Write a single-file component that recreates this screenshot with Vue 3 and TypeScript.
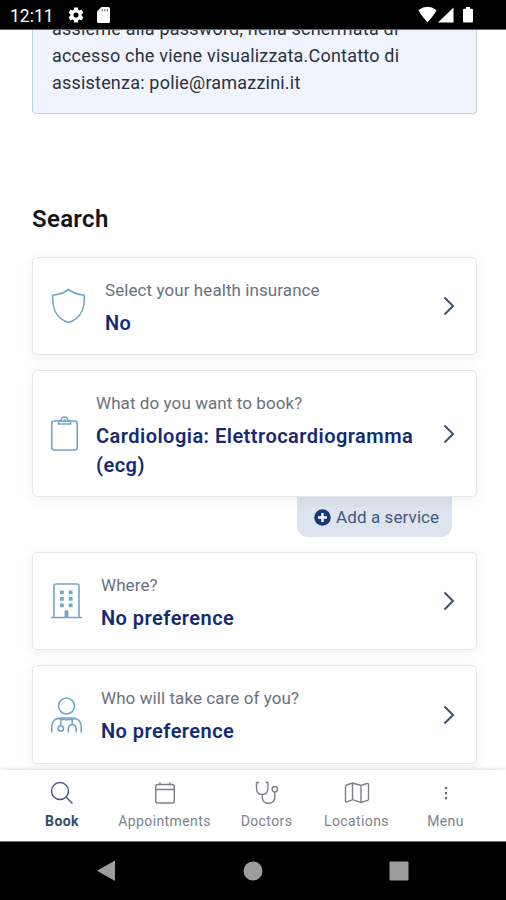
<script setup lang="ts">
type IconName = 'shield' | 'clipboard' | 'building' | 'doctor'

interface Field {
  icon: IconName
  label: string
  value: string
  action?: string
}

interface Tab {
  id: 'book' | 'appointments' | 'doctors' | 'locations' | 'menu'
  label: string
}

const fields: Field[] = [
  { icon: 'shield', label: 'Select your health insurance', value: 'No' },
  {
    icon: 'clipboard',
    label: 'What do you want to book?',
    value: 'Cardiologia: Elettrocardiogramma (ecg)',
    action: 'Add a service',
  },
  { icon: 'building', label: 'Where?', value: 'No preference' },
  { icon: 'doctor', label: 'Who will take care of you?', value: 'No preference' },
]

const tabs: Tab[] = [
  { id: 'book', label: 'Book' },
  { id: 'appointments', label: 'Appointments' },
  { id: 'doctors', label: 'Doctors' },
  { id: 'locations', label: 'Locations' },
  { id: 'menu', label: 'Menu' },
]
</script>

<template>
  <div class="screen">
    <header class="status">
      <span class="clock">12:11</span>
      <svg class="gear" width="18" height="18" viewBox="0 0 24 24">
        <path fill="#fff" fill-rule="evenodd" d="M19.4 13c.04-.3.06-.65.06-1s-.02-.7-.07-1l2.1-1.6c.2-.15.25-.42.12-.64l-2-3.46c-.12-.22-.38-.3-.6-.22l-2.5 1a7.300 7.300 0 0 0-1.700-.98L14.450 2.420A.49.49 0 0 0 13.960 2h-4c-.25 0-.45.180-.49.420L9.100 5.070c-.61.250-1.170.590-1.690.980l-2.490-1c-.230-.090-.490 0-.610.220l-2 3.460c-.130.220-.070.490.120.640L4.540 11c-.050.330-.080.670-.080 1s.030.670.080 1l-2.110 1.650c-.190.150-.240.420-.120.640l2 3.460c.120.220.380.300.610.220l2.490-1c.520.400 1.080.730 1.690.980l.380 2.650c.030.240.240.420.490.420h4c.250 0 .460-.180.490-.420l.380-2.650c.610-.250 1.170-.590 1.690-.980l2.490 1c.230.090.490 0 .610-.220l2-3.460c.120-.220.070-.490-.120-.640zM12 15.400a3.400 3.400 0 1 1 0-6.800 3.400 3.400 0 0 1 0 6.800z" />
      </svg>
      <svg class="sd" width="13" height="16" viewBox="0 0 13 16">
        <path fill="#fff" d="M4.500 0H11.500Q13 0 13 1.500V14.500Q13 16 11.500 16H1.500Q0 16 0 14.500V4.500z" />
        <path stroke="#888" stroke-width="1.200" d="M5.300 2v2.600M7.800 2v2.600M10.300 2v2.600" />
      </svg>
      <span class="spacer"></span>
      <svg width="56" height="18" viewBox="0 0 56 18">
        <path fill="#fff" d="M.5 4Q9.500-2.500 18.500 4Q18.500 6 9.500 16.500Q.5 6 .5 4zM35.500 1.500V16.500H20zM46.500 2.700h1.500V1h4v1.700H53.500q1.500 0 1.500 1V15.500q0 1-1 1h-8q-1 0-1-1V3.700q0-1 1.500-1z" />
      </svg>
    </header>

    <main class="content">
      <p class="notice">
        assieme alla password, nella schermata di<br />accesso che viene visualizzata.Contatto di<br />assistenza: polie@ramazzini.it
      </p>
      <h1>Search</h1>
      <section v-for="field in fields" :key="field.icon" class="field">
        <button class="card" :class="field.icon">
          <svg v-if="field.icon === 'shield'" class="icon" width="35" height="36" viewBox="0 0 35 36">
            <path d="M17.500 1.500C13 5 7.500 6.600 1.700 7.200C1 20 5.500 31 17.500 34.500C29.500 31 34 20 33.300 7.200C27.500 6.600 22 5 17.500 1.500z" />
          </svg>
          <svg v-else-if="field.icon === 'clipboard'" class="icon" width="27" height="36" viewBox="0 0 27 36">
            <rect x=".8" y="5" width="25.400" height="29" rx="2.500" />
            <path d="M7.500 5V8H19.500V5H16.800V4.300A3.300 3.300 0 0 0 10.200 4.300V5z" />
            <circle cx="13.500" cy="4.700" r=".7" />
          </svg>
          <svg v-else-if="field.icon === 'building'" class="icon" width="31" height="36" viewBox="0 0 31 36">
            <path d="M3 34.300V3Q3 1 5 1H26Q28 1 28 3V34.300M0 34.500H31" />
            <path class="solid" d="M9 7.500h3.800v3.800H9zM17.800 7.500h3.800v3.800h-3.800zM9 14h3.800v3.800H9zM17.800 14h3.800v3.800h-3.800zM9 20.500h3.800v3.800H9zM17.800 20.500h3.800v3.800h-3.800zM13.600 34.500v-6q0-1.500 1.900-1.500t1.900 1.500v6z" />
          </svg>
          <svg v-else class="icon" width="31" height="36" viewBox="0 0 31 36">
            <circle cx="15.500" cy="9" r="8" />
            <path d="M.8 35.500V30C.8 24 4.500 21.300 9.500 21H21.500C26.500 21.300 30.200 24 30.200 30V35.500M9.800 21v7.800M6 21.500Q15.500 24 25 21.500M21.200 21v6.500M17.300 35.500V32.200Q17.500 27.500 21.200 27.500T25.200 32.200V35.500" />
            <circle cx="9.800" cy="31.500" r="2.700" />
          </svg>
          <span class="copy">
            <span class="label">{{ field.label }}</span>
            <span class="value">{{ field.value }}</span>
          </span>
          <svg class="chevron" width="13" height="20" viewBox="0 0 13 20">
            <path d="M1.500 1.500L10 10L1.500 18.500" />
          </svg>
        </button>
        <button v-if="field.action" class="add">
          <svg width="17" height="17" viewBox="0 0 17 17">
            <circle cx="8.500" cy="8.500" r="8.300" fill="#163a7a" />
            <path stroke="#fff" stroke-width="2.400" d="M8.500 4v9M4 8.500h9" />
          </svg>
          <span>{{ field.action }}</span>
        </button>
      </section>
    </main>

    <nav class="tabs">
      <a v-for="tab in tabs" :key="tab.id" class="tab" :class="tab.id">
        <svg v-if="tab.id === 'book'" width="24" height="24" viewBox="0 0 24 24">
          <circle cx="10" cy="10" r="8.500" />
          <path d="M16 16l6.500 6.500" />
        </svg>
        <svg v-else-if="tab.id === 'appointments'" width="24" height="24" viewBox="0 0 24 24">
          <rect x="2.700" y="3.500" width="18.600" height="18.500" rx="2" />
          <path d="M2.700 8.500h18.600M7 1.200V4M17 1.200V4" />
        </svg>
        <svg v-else-if="tab.id === 'doctors'" width="24" height="24" viewBox="0 0 24 24">
          <path d="M4 1.500H1.500V7.500C1.500 11.500 4 13.500 7.200 13.500S12.900 11.500 12.900 7.500V1.500H10.500M7.200 13.500V16C7.200 20 10 22.300 13.600 22.300S19.800 20 19.800 16V11" />
          <circle cx="19.800" cy="8.200" r="2.700" />
        </svg>
        <svg v-else-if="tab.id === 'locations'" width="26" height="24" viewBox="0 0 26 24">
          <path d="M1.500 5.500Q1.500 4.500 2.500 4L8.500 2L17 4.500L23 2.500Q24.500 2 24.500 3.500V18Q24.500 19 23.500 19.400L17 21.500L8.500 18.700L3 20.800Q1.500 21.300 1.500 20zM8.500 2v16.700M17 4.500v17" />
        </svg>
        <svg v-else width="24" height="24" viewBox="0 0 24 24">
          <path class="dots" d="M10.900 6h2.200v2.200h-2.200zM10.900 11h2.200v2.200h-2.200zM10.900 16h2.200v2.200h-2.200z" />
        </svg>
        <span>{{ tab.label }}</span>
      </a>
    </nav>

    <footer class="system">
      <svg width="20" height="22" viewBox="0 0 20 22"><path d="M19 .5V21L1 10.800z" /></svg>
      <svg width="20" height="20" viewBox="0 0 20 20"><circle cx="10" cy="10" r="9.500" /></svg>
      <svg width="20" height="20" viewBox="0 0 20 20"><rect x=".5" y=".5" width="19" height="19" rx="1" /></svg>
    </footer>
  </div>
</template>

<style>
body {
  margin: 0;
  background: #fff;
}
</style>

<style scoped>
.screen {
  display: flex;
  flex-direction: column;
  width: 506px;
  height: 900px;
  overflow: hidden;
  background: #fff;
  font-family: Roboto, "Liberation Sans", sans-serif;
}
.status {
  display: flex;
  flex: none;
  align-items: center;
  box-sizing: border-box;
  height: 30px;
  padding: 1px 32px 0 10px;
  background: #000;
  border-bottom: 1px solid #666;
  color: #fff;
}
.clock {
  width: 57px;
  padding-top: 1px;
  font-size: 17.5px;
}
.sd {
  margin-left: 12px;
}
.spacer {
  flex: 1;
}
.content {
  flex: 1;
  min-height: 0;
  overflow: hidden;
  padding: 0 29px 0 32px;
}
.notice {
  box-sizing: border-box;
  margin: -15px 0 0;
  padding: 0 0 17px 19px;
  width: 445px;
  border: 1px solid #c0d0ea;
  border-top: 0;
  border-radius: 0 0 4px 4px;
  background: #eff4fe;
  color: #2c3140;
  font-size: 18px;
  line-height: 27px;
  letter-spacing: 0.2px;
  white-space: nowrap;
}
h1 {
  margin: 88px 0 21px;
  color: #141518;
  font-size: 24px;
  font-weight: 600;
  line-height: 34px;
  letter-spacing: 0.3px;
}
.field {
  display: flex;
  flex-direction: column;
  margin-bottom: 15px;
}
button {
  font-family: inherit;
  text-align: left;
}
.card {
  display: flex;
  align-items: center;
  box-sizing: border-box;
  width: 445px;
  min-height: 98px;
  padding: 16px 20px 16px 18px;
  border: 1px solid #e6e7e9;
  border-radius: 5px;
  background: #fff;
  box-shadow: 0 3px 14px rgba(0, 0, 0, 0.06);
}
.card.clipboard {
  min-height: 127px;
}
.card.doctor {
  min-height: 99px;
}
.icon {
  flex: none;
  margin-right: 19px;
  fill: none;
  stroke: #73a6cc;
  stroke-width: 1.6;
}
.clipboard .icon {
  margin-right: 18px;
}
.icon .solid {
  fill: #73a6cc;
  stroke: none;
}
.copy {
  display: flex;
  flex: 1;
  flex-direction: column;
  gap: 5px;
  padding-top: 2px;
}
.label {
  color: #69717e;
  font-size: 17px;
  line-height: 27px;
  letter-spacing: 0.08px;
}
.value {
  color: #142b73;
  font-size: 20px;
  font-weight: 600;
  line-height: 29px;
  letter-spacing: 0.47px;
}
.clipboard .value {
  margin-right: -10px;
}
.chevron {
  flex: none;
  fill: none;
  stroke: #3b5570;
  stroke-width: 2;
}
.add {
  display: flex;
  align-items: center;
  align-self: flex-end;
  gap: 5px;
  box-sizing: border-box;
  width: 155px;
  height: 40px;
  margin-right: 25px;
  padding: 0 0 0 17px;
  border: 0;
  border-radius: 0 0 11px 11px;
  background: linear-gradient(#d4dae3, #dee4ed 12px);
  color: #435782;
  font-size: 17px;
  letter-spacing: 0.1px;
  white-space: nowrap;
}
.tabs {
  position: relative;
  display: flex;
  flex: none;
  box-sizing: border-box;
  height: 71px;
  padding: 11px 15px 0;
  background: #fff;
  box-shadow: 0 -1px 4px rgba(0, 0, 0, 0.13);
}
.tab {
  display: flex;
  flex-direction: column;
  align-items: center;
  gap: 6px;
  width: 90px;
  color: #7b828c;
  font-size: 14px;
  line-height: 20px;
  letter-spacing: 0.4px;
}
.tab svg {
  fill: none;
  stroke: #7b8188;
  stroke-width: 1.4;
}
.tab .dots {
  fill: #666d75;
  stroke: none;
}
.book {
  width: 94px;
  color: #344b67;
  font-weight: 700;
}
.book svg {
  stroke: #4c5687;
}
.appointments {
  width: 111px;
}
.doctors {
  width: 93px;
}
.locations {
  width: 87px;
}
.menu {
  width: 91px;
}
.system {
  display: flex;
  flex: none;
  align-items: center;
  justify-content: space-between;
  box-sizing: border-box;
  height: 59px;
  padding: 0 97px 0 96px;
  border-top: 1px solid #777;
  background: #000;
}
.system svg {
  fill: #9d9d9d;
}
</style>
